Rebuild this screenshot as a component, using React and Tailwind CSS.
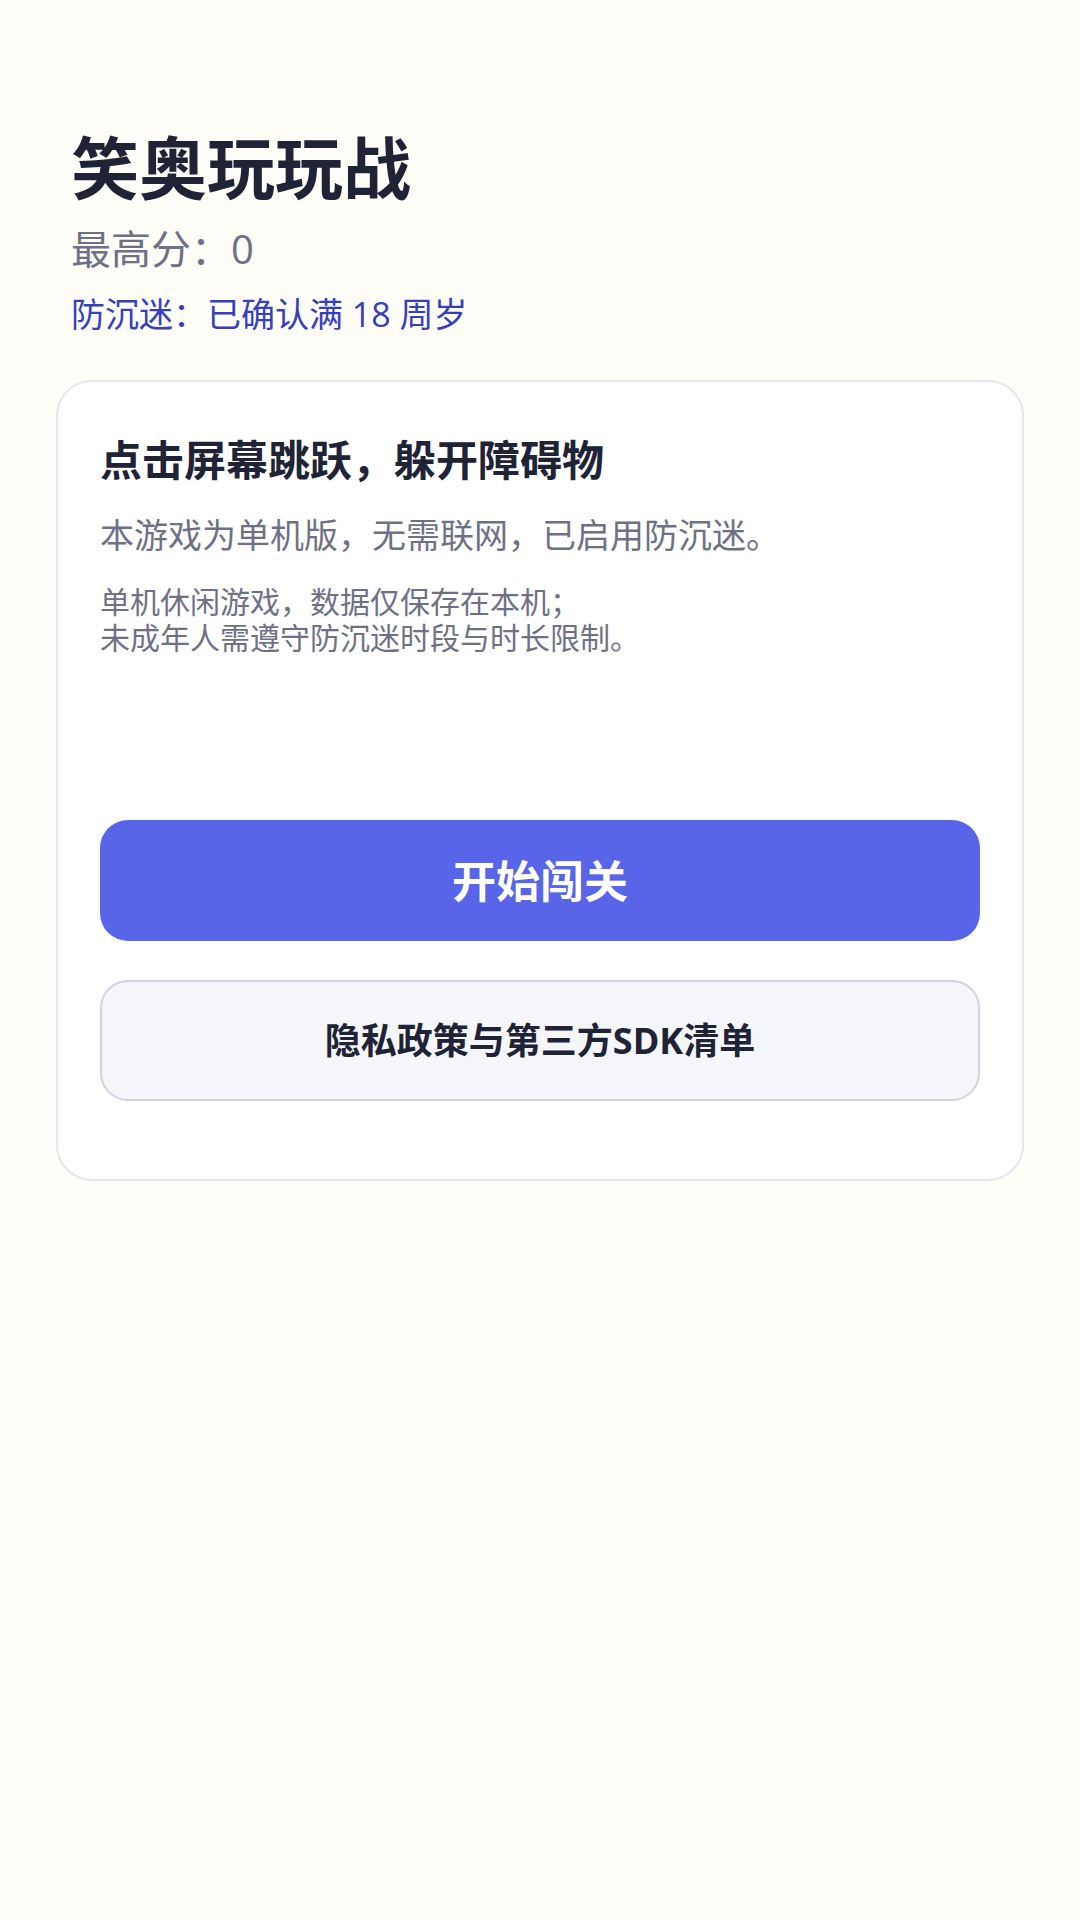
export default function App() {
  return (
    <main className="min-h-screen bg-[#fffdf8] px-14 pt-32 font-['Open_Sans','Noto_Sans_CJK_SC',sans-serif] text-[#202336]">
      <header className="px-[15px]">
        <h1 className="text-[68px] leading-[80px] font-bold">笑奥玩玩战</h1>
        <p className="mt-4 text-[40px] leading-[50px] text-[#6e7186]">最高分：0</p>
        <p className="mt-[18px] text-[34px] leading-[44px] text-[#363fbc]">防沉迷：已确认满 18 周岁</p>
      </header>
      <section className="mt-11 rounded-[36px] border-2 border-[#e6e7ed] bg-white px-[42px] pt-12 pb-[78px]">
        <h2 className="text-[42px] leading-[60px] font-bold">点击屏幕跳跃，躲开障碍物</h2>
        <p className="mt-5 text-[34px] leading-[50px] text-[#6e7186]">本游戏为单机版，无需联网，已启用防沉迷。</p>
        <p className="mt-6 text-[30px] leading-[36px] text-[#6e7186]">
          单机休闲游戏，数据仅保存在本机；<br />未成年人需遵守防沉迷时段与时长限制。
        </p>
        <div className="mt-[164px] flex flex-col gap-[39px]">
          <button type="button" className="h-[121px] rounded-[28px] bg-[#5865e8] text-[44px] font-bold text-white">开始闯关</button>
          <button type="button" className="h-[121px] rounded-[28px] border-2 border-[#d0d4e0] bg-[#f4f6fa] text-[36px] font-bold">隐私政策与第三方SDK清单</button>
        </div>
      </section>
    </main>
  );
}
